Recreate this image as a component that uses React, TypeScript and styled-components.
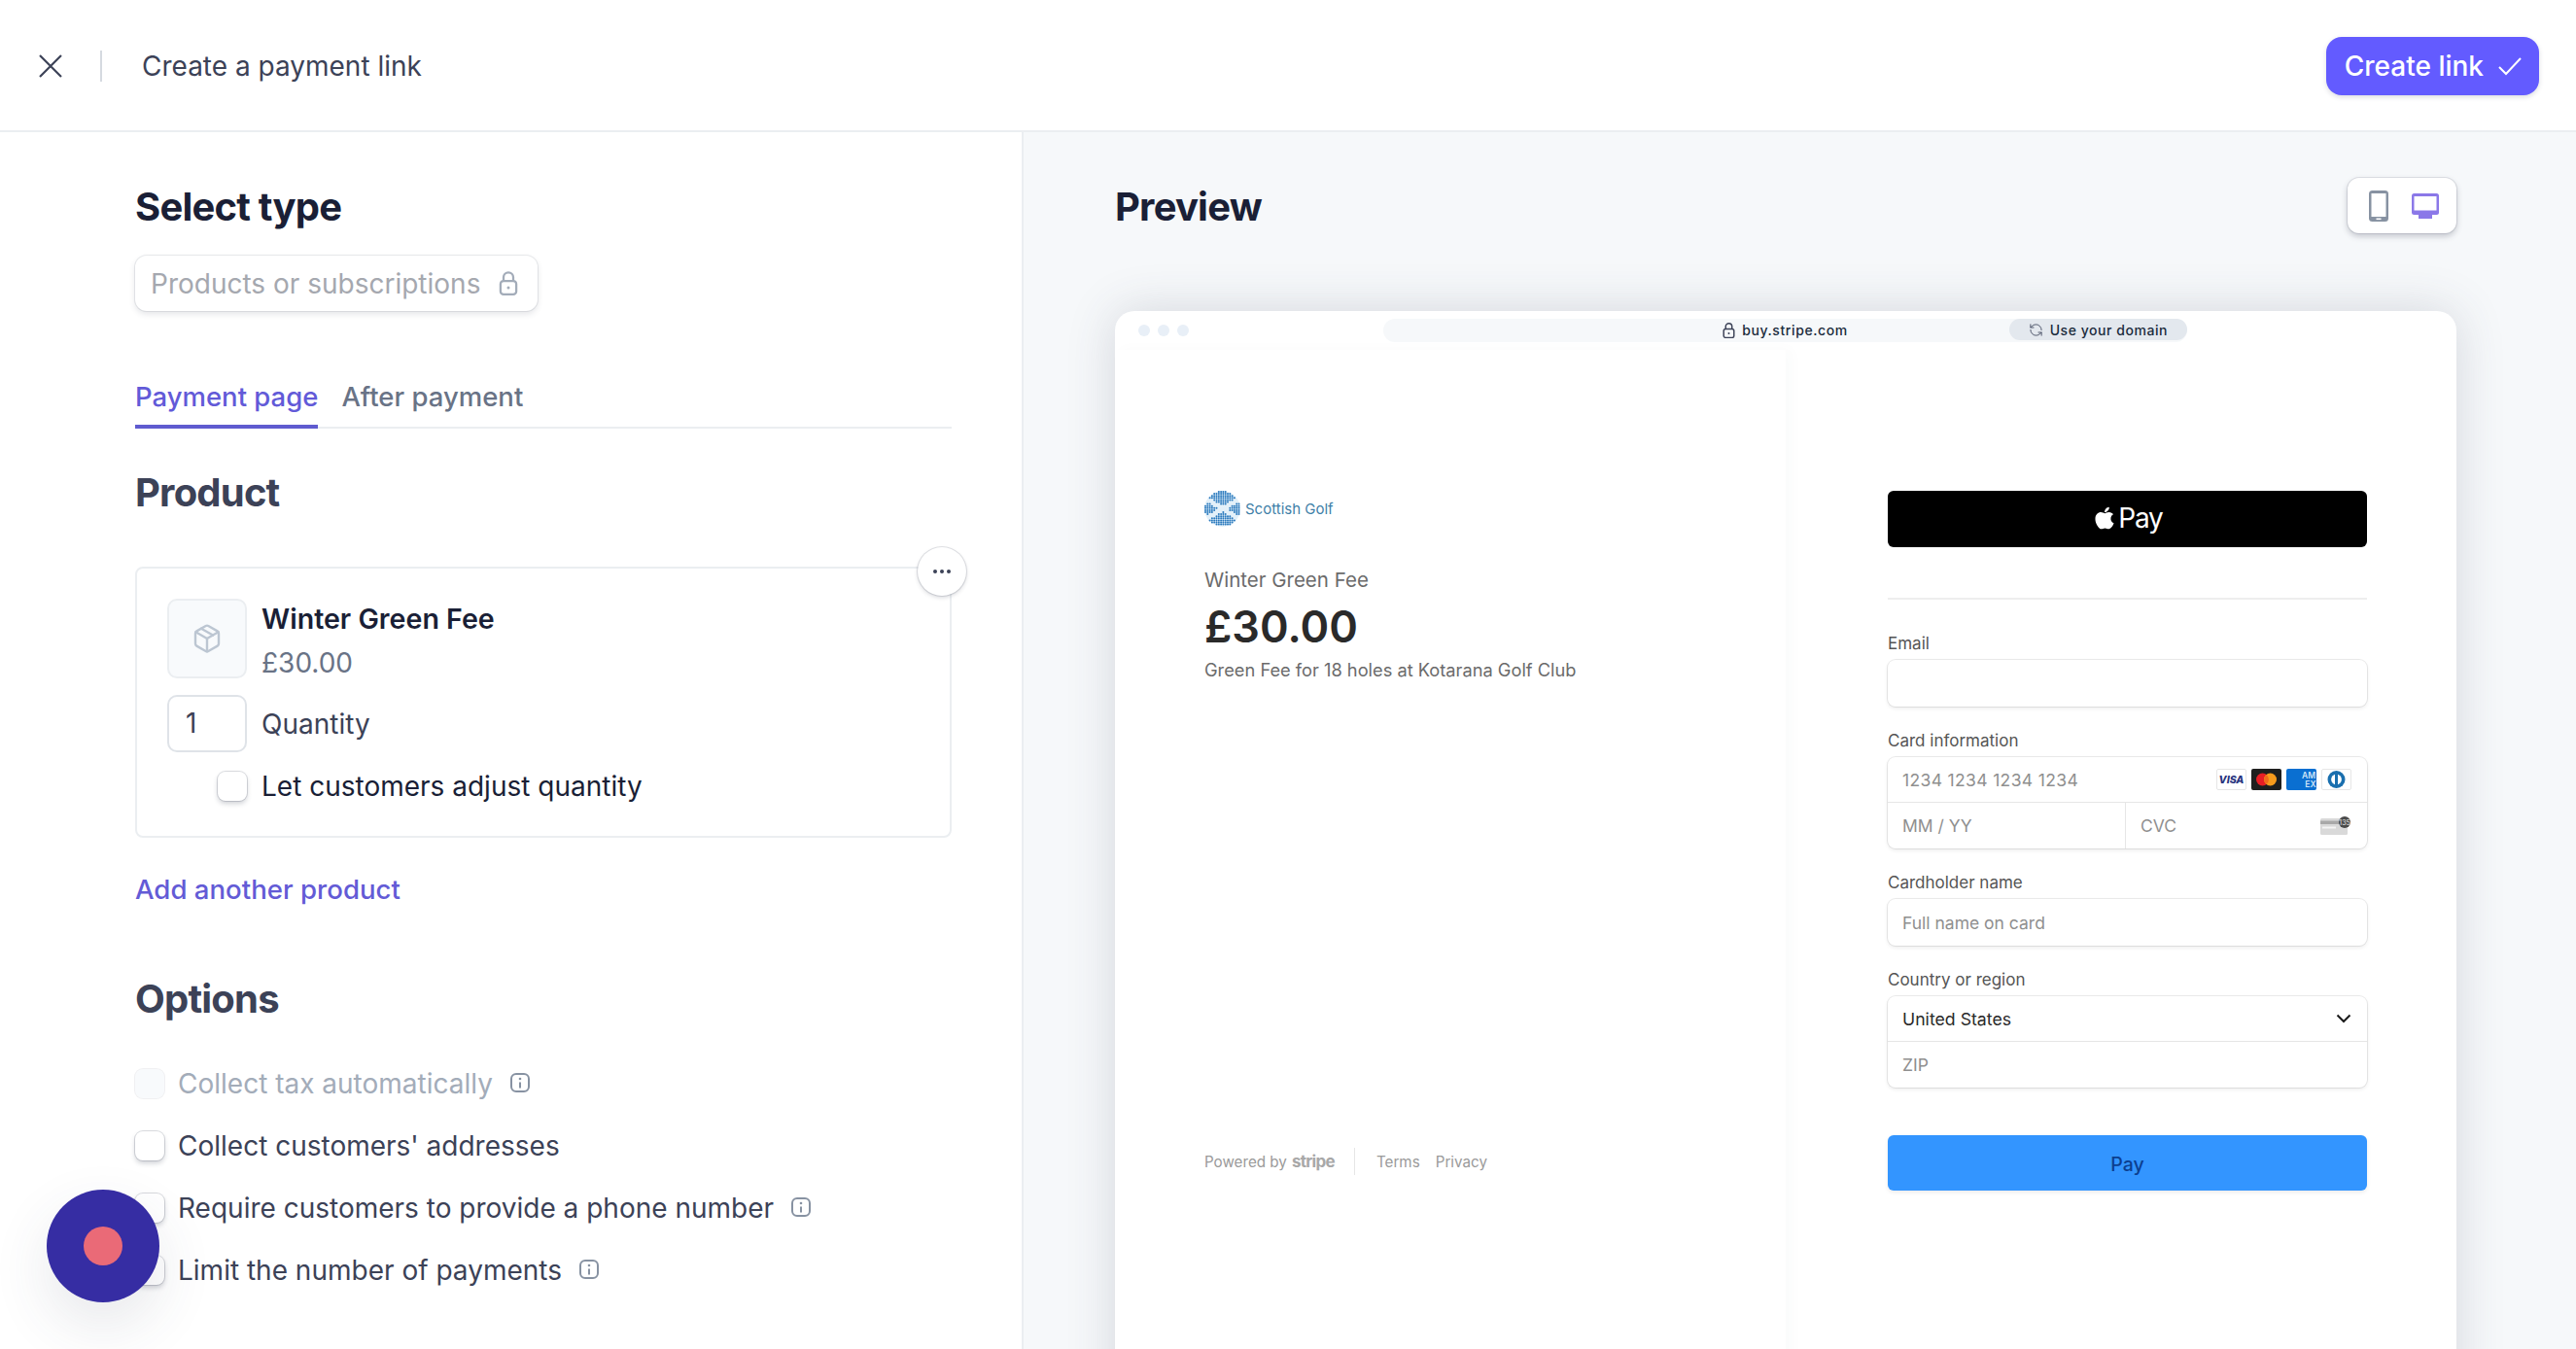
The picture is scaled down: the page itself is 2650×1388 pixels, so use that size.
import React from 'react';
import styled, { createGlobalStyle } from 'styled-components';
import { FaApple } from 'react-icons/fa';
import { Package, RefreshCcw } from 'lucide-react';

const GlobalStyle = createGlobalStyle`
  html, body {
    margin: 0;
    padding: 0;
    background: #ffffff;
    font-family: Inter, "Liberation Sans", sans-serif;
  }
  * {
    box-sizing: border-box;
  }
`;

const Page = styled.div`
  position: relative;
  display: flex;
  flex-direction: column;
  height: 100vh;
  overflow: hidden;
`;

const TopBar = styled.header`
  display: flex;
  align-items: center;
  flex: 0 0 136px;
  padding: 2px 38px 0 38px;
  border-bottom: 2px solid #ebeef1;
`;

const CloseButton = styled.div`
  display: flex;
  width: 28px;
  height: 28px;
  color: #3c4257;
`;

const TopDivider = styled.div`
  width: 2px;
  height: 32px;
  margin: 0 41px 0 37px;
  background: #d5dae0;
`;

const PageTitle = styled.div`
  flex: 1;
  font-size: 28px;
  line-height: 40px;
  color: #3c4257;
`;

const CreateButton = styled.div`
  display: flex;
  align-items: center;
  gap: 15px;
  height: 60px;
  padding: 0 18px 0 19px;
  border-radius: 16px;
  background: #635bff;
  color: #ffffff;
  font-size: 28px;
  font-weight: 500;
  box-shadow: 0 2px 5px rgba(60, 66, 87, 0.18);
`;

const Columns = styled.div`
  display: flex;
  flex: 1;
  min-height: 0;
`;

const LeftPanel = styled.main`
  flex: 0 0 1053px;
  padding: 53px 72px 0 139px;
  border-right: 2px solid #ebeef1;
`;

const RightPanel = styled.section`
  flex: 1;
  padding: 47px 123px 0 94px;
  background: #f6f8fa;
`;

const Heading = styled.h2<{ $muted?: boolean }>`
  margin: 0;
  font-size: 40px;
  line-height: 48px;
  font-weight: 700;
  letter-spacing: -0.8px;
  color: ${props => (props.$muted ? '#3c4257' : '#1a1f36')};
`;

const TypeBox = styled.div`
  display: inline-flex;
  align-items: center;
  gap: 19px;
  width: 414px;
  height: 57px;
  margin-top: 26px;
  padding: 0 16px;
  border-radius: 12px;
  background: #ffffff;
  color: #a5a8af;
  font-size: 28px;
  box-shadow: 0 0 0 1px rgba(60, 66, 87, 0.1), 0 3px 6px rgba(60, 66, 87, 0.14);
  white-space: nowrap;
`;

const TabBar = styled.div`
  display: flex;
  gap: 24px;
  height: 56px;
  margin-top: 65px;
  border-bottom: 2px solid #ebeef1;
`;

const Tab = styled.div<{ $active?: boolean }>`
  height: 56px;
  line-height: 47px;
  font-size: 27.5px;
  font-weight: 500;
  color: ${props => (props.$active ? '#625ad8' : '#697386')};
  border-bottom: ${props => (props.$active ? '4px solid #5f5bcf' : 'none')};
`;

const ProductHeading = styled(Heading)`
  margin-top: 42px;
`;

const ProductCard = styled.div`
  position: relative;
  height: 279px;
  margin-top: 52px;
  padding: 31px 31px 0;
  border: 2px solid #ebeef1;
  border-radius: 8px;
`;

const MoreButton = styled.div`
  position: absolute;
  top: -22px;
  right: -17px;
  display: flex;
  align-items: center;
  justify-content: center;
  gap: 3px;
  width: 50px;
  height: 50px;
  border-radius: 50%;
  background: #ffffff;
  box-shadow: 0 0 0 1px rgba(60, 66, 87, 0.14), 0 2px 4px rgba(60, 66, 87, 0.2);
`;

const MoreDot = styled.span`
  width: 4px;
  height: 4px;
  border-radius: 50%;
  background: #3c4257;
`;

const ProductRow = styled.div`
  display: flex;
  gap: 15px;
  height: 82px;
`;

const Thumb = styled.div`
  display: flex;
  align-items: center;
  justify-content: center;
  width: 82px;
  height: 82px;
  border: 2px solid #ebeef1;
  border-radius: 10px;
  background: #f8fafc;
  color: #bcc6d2;
`;

const ProductText = styled.div`
  display: flex;
  flex-direction: column;
  gap: 5px;
  padding-top: 1px;
`;

const ProductName = styled.div`
  font-size: 28.6px;
  line-height: 40px;
  font-weight: 600;
  color: #1a1f36;
`;

const ProductPrice = styled.div`
  font-size: 28px;
  line-height: 40px;
  color: #697386;
`;

const QuantityRow = styled.div`
  display: flex;
  align-items: center;
  gap: 15px;
  margin-top: 17px;
`;

const QuantityInput = styled.div`
  width: 82px;
  height: 59px;
  padding-left: 19px;
  line-height: 58px;
  font-size: 28px;
  color: #3c4257;
  border-radius: 10px;
  box-shadow: inset 0 0 0 2px #dfe3e8;
`;

const RowLabel = styled.div<{ $disabled?: boolean; $dark?: boolean }>`
  font-size: 28px;
  line-height: 40px;
  white-space: nowrap;
  color: ${props => (props.$disabled ? '#a3acb9' : props.$dark ? '#1a1f36' : '#3c4257')};
`;

const AdjustRow = styled.div`
  display: flex;
  align-items: center;
  gap: 15px;
  height: 31px;
  margin: 19px 0 0 52px;
`;

const Checkbox = styled.div<{ $disabled?: boolean }>`
  flex: 0 0 30px;
  height: 30px;
  border-radius: 8px;
  background: ${props => (props.$disabled ? '#f8fafc' : '#ffffff')};
  box-shadow: ${props =>
    props.$disabled
      ? '0 0 0 1px rgba(60, 66, 87, 0.08)'
      : '0 0 0 1px rgba(60, 66, 87, 0.18), 0 3px 5px rgba(60, 66, 87, 0.24)'};
`;

const AddLink = styled.div`
  margin-top: 33px;
  font-size: 27.6px;
  line-height: 40px;
  font-weight: 500;
  color: #635bd6;
`;

const OptionsHeading = styled(Heading)`
  margin-top: 69px;
`;

const OptionList = styled.div`
  display: flex;
  flex-direction: column;
  margin-top: 31px;
`;

const OptionRow = styled.div`
  display: flex;
  align-items: center;
  gap: 14px;
  height: 64px;
`;

const InfoIcon = styled.svg`
  flex: 0 0 22px;
  margin-left: 3px;
  margin-bottom: 2px;
  color: #8792a2;
`;

const Launcher = styled.div`
  position: absolute;
  left: 48px;
  bottom: 48px;
  display: flex;
  align-items: center;
  justify-content: center;
  width: 116px;
  height: 116px;
  border-radius: 50%;
  background: #362da3;
  box-shadow: 0 24px 60px rgba(60, 66, 87, 0.12);
`;

const LauncherDot = styled.div`
  width: 40px;
  height: 40px;
  border-radius: 50%;
  background: #ea6a77;
`;

const PreviewHeader = styled.div`
  display: flex;
  justify-content: space-between;
  height: 60px;
  align-items: center;
`;

const DeviceToggle = styled.div`
  display: flex;
  align-items: center;
  align-self: flex-start;
  gap: 24px;
  width: 112px;
  height: 57px;
  padding-left: 22px;
  border-radius: 12px;
  background: #ffffff;
  box-shadow: 0 0 0 1px rgba(60, 66, 87, 0.12), 0 3px 6px rgba(60, 66, 87, 0.28);
`;

const BrowserFrame = styled.div`
  height: 1200px;
  margin-top: 77px;
  border-radius: 20px 20px 0 0;
  background: #ffffff;
  box-shadow: 0 0 50px rgba(60, 66, 87, 0.18);
`;

const BrowserBar = styled.div`
  display: grid;
  grid-template-columns: 252px 1fr;
  align-items: start;
  height: 40px;
  padding: 8px 277px 0 24px;
`;

const BrowserDots = styled.div`
  display: flex;
  gap: 8px;
  padding-top: 6px;
`;

const BrowserDot = styled.span`
  width: 12px;
  height: 12px;
  border-radius: 50%;
  background: #e8eff7;
`;

const UrlBar = styled.div`
  display: grid;
  grid-template-columns: 1fr auto 1fr;
  align-items: center;
  height: 24px;
  border-radius: 12px;
  background: #f6f8fa;
`;

const UrlText = styled.div`
  grid-column: 2;
  display: flex;
  align-items: center;
  gap: 7px;
  font-size: 14px;
  line-height: 24px;
  font-weight: 500;
  letter-spacing: 0.6px;
  color: #1a2b3c;
`;

const DomainPill = styled.div`
  grid-column: 3;
  justify-self: end;
  align-self: start;
  display: flex;
  align-items: center;
  gap: 7px;
  height: 22px;
  padding: 0 20px;
  border-radius: 11px;
  background: #e3e8ee;
  color: #1a2b3c;
  font-size: 14px;
  font-weight: 500;
  letter-spacing: 0.55px;
`;

const CheckoutBody = styled.div`
  display: grid;
  grid-template-columns: 690px 1fr;
  height: 1160px;
`;

const SummaryColumn = styled.div`
  padding: 145px 0 0 92px;
  box-shadow: 6px 0 14px rgba(60, 66, 87, 0.025);
`;

const BrandRow = styled.div`
  display: flex;
  align-items: center;
  gap: 5px;
  height: 37px;
  font-size: 15px;
  color: #3f7fa8;
`;

const SummaryName = styled.div`
  margin-top: 41px;
  font-size: 20.5px;
  line-height: 28px;
  color: #6b6b6b;
`;

const SummaryPrice = styled.div`
  margin-top: 5px;
  font-size: 45px;
  line-height: 58px;
  font-weight: 600;
  color: #2a2a2a;
`;

const SummaryDescription = styled.div`
  margin-top: 3px;
  font-size: 18.25px;
  line-height: 24px;
  color: #6b6b6b;
`;

const SummaryFooter = styled.div`
  display: flex;
  align-items: center;
  height: 28px;
  margin-top: 480px;
  font-size: 15.2px;
  color: #9a9a9a;
`;

const StripeWord = styled.span`
  margin-left: 5px;
  font-size: 17px;
  font-weight: 700;
  letter-spacing: -0.7px;
  color: #a8a8a8;
`;

const FooterDivider = styled.span`
  width: 1px;
  height: 28px;
  margin: 0 22px 0 20px;
  background: #e6e6e6;
`;

const FooterLink = styled.span`
  margin-right: 16px;
`;

const FormColumn = styled.div`
  padding: 145px 92px 0 105px;
`;

const ApplePayButton = styled.div`
  display: flex;
  align-items: center;
  justify-content: center;
  gap: 1px;
  height: 58px;
  padding-bottom: 2px;
  border-radius: 6px;
  background: #000000;
  color: #ffffff;
  font-size: 28px;
  letter-spacing: -1.2px;
`;

const FormSeparator = styled.div`
  height: 2px;
  margin: 52px 0 34px;
  background: #eeeeee;
`;

const FieldLabel = styled.div`
  margin-bottom: 6px;
  font-size: 17px;
  line-height: 22px;
  color: #555555;
`;

const FieldBox = styled.div`
  margin-bottom: 24px;
  border-radius: 8px;
  background: #ffffff;
  box-shadow: 0 0 0 1px rgba(0, 0, 0, 0.08), 0 2px 4px rgba(0, 0, 0, 0.08);
`;

const FieldRow = styled.div<{ $line?: boolean; $height?: number }>`
  display: flex;
  align-items: center;
  justify-content: space-between;
  height: ${props => props.$height ?? 47}px;
  padding: 0 16px 0 15px;
  border-bottom: ${props => (props.$line ? '1px solid #e6e6e6' : 'none')};
`;

const SplitRow = styled.div`
  display: grid;
  grid-template-columns: 245px 1fr;
  height: 47px;
`;

const SplitCell = styled.div<{ $line?: boolean }>`
  display: flex;
  align-items: center;
  justify-content: space-between;
  padding: 0 16px 0 15px;
  border-right: ${props => (props.$line ? '1px solid #e6e6e6' : 'none')};
`;

const Placeholder = styled.span`
  font-size: 17.5px;
  color: #8f8f8f;
`;

const CardNumber = styled(Placeholder)`
  letter-spacing: 0.35px;
`;

const FieldValue = styled.span`
  font-size: 17.7px;
  color: #2a2a2a;
`;

const CardIcons = styled.div`
  display: flex;
  gap: 5px;
`;

const PayButton = styled.div`
  display: flex;
  align-items: center;
  justify-content: center;
  height: 57px;
  margin-top: 49px;
  padding-top: 2px;
  border-radius: 6px;
  background: #3395ff;
  color: #0c3f8f;
  font-size: 19.5px;
  font-weight: 500;
  box-shadow: 0 2px 4px rgba(0, 0, 0, 0.08);
`;

const LockIcon = ({ size = 20, color = '#a3acb9' }: { size?: number; color?: string }) => (
  <svg width={size} height={size * 1.25} viewBox="0 0 16 20" fill="none" stroke={color} strokeWidth="1.8">
    <rect x="1.5" y="8" width="13" height="11" rx="2.5" />
    <path d="M4 8V5a4 4 0 0 1 8 0v3" />
    <circle cx="8" cy="13.5" r="1.2" fill={color} stroke="none" />
  </svg>
);

const Info = () => (
  <InfoIcon width="22" height="22" viewBox="0 0 22 22" fill="none" stroke="currentColor" strokeWidth="2">
    <rect x="2" y="2" width="18" height="18" rx="5" />
    <circle cx="11" cy="7" r="1.3" fill="currentColor" stroke="none" />
    <path d="M11 10.500v6" />
  </InfoIcon>
);

// dots of the saltire badge: a flattened pale cross, big wedges top and bottom
const saltireDots = () => {
  const dots: { x: number; y: number }[] = [];
  for (let y = 1; y < 37; y += 2.1) {
    for (let x = 1; x < 37; x += 2.3) {
      const dx = x - 18.5;
      const dy = y - 18.5;
      const inCircle = dx * dx + dy * dy < 18 * 18;
      const onCross = Math.abs(Math.abs(dy) - Math.abs(dx) * 0.62) < 2.8;
      if (inCircle && !onCross) dots.push({ x, y });
    }
  }
  return dots;
};

const ScottishLogo = () => (
  <svg width="37" height="37" viewBox="0 0 37 37">
    <circle cx="18.5" cy="18.5" r="18.5" fill="#e3f0f9" />
    {saltireDots().map(dot => (
      <circle key={`${dot.x}-${dot.y}`} cx={dot.x} cy={dot.y} r="1" fill="#2a79bd" />
    ))}
  </svg>
);

const VisaIcon = () => (
  <svg width="31" height="22" viewBox="0 0 31 22">
    <rect x="0.5" y="0.5" width="30" height="21" rx="1.5" fill="#fff" stroke="#e6e6e6" />
    <text x="15.5" y="15" textAnchor="middle" fontFamily="Inter, sans-serif" fontSize="10.5" fontWeight="800" fontStyle="italic" fill="#27337e">VISA</text>
  </svg>
);

const MastercardIcon = () => (
  <svg width="31" height="22" viewBox="0 0 31 22">
    <rect width="31" height="22" rx="2" fill="#1f1f1f" />
    <circle cx="11.5" cy="11" r="6.5" fill="#e81e25" />
    <circle cx="19.5" cy="11" r="6.5" fill="#f89b1c" />
    <path d="M15.5 5.900a6.500 6.500 0 0 1 0 10.200a6.500 6.500 0 0 1 0-10.200z" fill="#f26a1b" />
  </svg>
);

const AmexIcon = () => (
  <svg width="31" height="22" viewBox="0 0 31 22">
    <rect width="31" height="22" rx="2" fill="#0a6fd1" />
    <text x="23" y="10" textAnchor="middle" fontFamily="Inter, sans-serif" fontSize="8.500" fontWeight="600" fill="#cfe4f7">AM</text>
    <text x="25" y="18.500" textAnchor="middle" fontFamily="Inter, sans-serif" fontSize="8.500" fontWeight="600" fill="#cfe4f7">EX</text>
  </svg>
);

const DinersIcon = () => (
  <svg width="31" height="22" viewBox="0 0 31 22">
    <rect x="0.5" y="0.5" width="30" height="21" rx="1.5" fill="#fff" stroke="#e6e6e6" />
    <circle cx="15.5" cy="11" r="9" fill="#1a6fae" />
    <circle cx="15.5" cy="11" r="5.4" fill="#fff" />
    <rect x="14" y="4.500" width="3" height="13" fill="#1a6fae" />
  </svg>
);

const CvcIcon = () => (
  <svg width="32" height="20" viewBox="0 0 32 20">
    <rect x="0" y="2" width="28" height="17" rx="1.5" fill="#d9d9d9" />
    <rect x="0" y="4.500" width="28" height="3.500" fill="#a9a9a9" />
    <rect x="2" y="10.500" width="14" height="2" fill="#f4f4f4" />
    <circle cx="25" cy="6" r="6" fill="#4a4a4a" />
    <text x="25" y="8.500" textAnchor="middle" fontFamily="Inter, sans-serif" fontSize="7" fill="#e8e8e8">135</text>
  </svg>
);

const App: React.FC = () => {
  return (
    <Page>
      <GlobalStyle />
      <TopBar>
        <CloseButton>
          <svg width="28" height="28" viewBox="0 0 28 28" fill="none" stroke="currentColor" strokeWidth="2.2">
            <path d="M3 3L25 25M25 3L3 25" />
          </svg>
        </CloseButton>
        <TopDivider />
        <PageTitle>Create a payment link</PageTitle>
        <CreateButton>
          Create link
          <svg width="24" height="20" viewBox="0 0 24 20" fill="none" stroke="currentColor" strokeWidth="2">
            <path d="M1 11l7 7L23 2" />
          </svg>
        </CreateButton>
      </TopBar>
      <Columns>
        <LeftPanel>
          <Heading>Select type</Heading>
          <TypeBox>
            Products or subscriptions
            <LockIcon />
          </TypeBox>
          <TabBar>
            <Tab $active>Payment page</Tab>
            <Tab>After payment</Tab>
          </TabBar>
          <ProductHeading $muted>Product</ProductHeading>
          <ProductCard>
            <MoreButton>
              <MoreDot />
              <MoreDot />
              <MoreDot />
            </MoreButton>
            <ProductRow>
              <Thumb>
                <Package size={32} strokeWidth={1.8} />
              </Thumb>
              <ProductText>
                <ProductName>Winter Green Fee</ProductName>
                <ProductPrice>£30.00</ProductPrice>
              </ProductText>
            </ProductRow>
            <QuantityRow>
              <QuantityInput>1</QuantityInput>
              <RowLabel>Quantity</RowLabel>
            </QuantityRow>
            <AdjustRow>
              <Checkbox />
              <RowLabel $dark>Let customers adjust quantity</RowLabel>
            </AdjustRow>
          </ProductCard>
          <AddLink>Add another product</AddLink>
          <OptionsHeading $muted>Options</OptionsHeading>
          <OptionList>
            <OptionRow>
              <Checkbox $disabled />
              <RowLabel $disabled>Collect tax automatically</RowLabel>
              <Info />
            </OptionRow>
            <OptionRow>
              <Checkbox />
              <RowLabel>Collect customers' addresses</RowLabel>
            </OptionRow>
            <OptionRow>
              <Checkbox />
              <RowLabel>Require customers to provide a phone number</RowLabel>
              <Info />
            </OptionRow>
            <OptionRow>
              <Checkbox />
              <RowLabel>Limit the number of payments</RowLabel>
              <Info />
            </OptionRow>
          </OptionList>
        </LeftPanel>
        <RightPanel>
          <PreviewHeader>
            <Heading>Preview</Heading>
            <DeviceToggle>
              <svg width="20" height="32" viewBox="0 0 20 32">
                <rect width="20" height="32" rx="3.5" fill="#8792a2" />
                <rect x="2.5" y="3" width="15" height="24" fill="#ffffff" />
                <rect x="7.5" y="28.5" width="5" height="1.6" fill="#ffffff" />
              </svg>
              <svg width="28" height="26" viewBox="0 0 28 26">
                <rect width="28" height="22" rx="2.5" fill="#8b78e8" />
                <rect x="2.5" y="3" width="23" height="14.5" fill="#ffffff" />
                <rect x="7" y="22" width="14" height="4" fill="#8b78e8" />
              </svg>
            </DeviceToggle>
          </PreviewHeader>
          <BrowserFrame>
            <BrowserBar>
              <BrowserDots>
                <BrowserDot />
                <BrowserDot />
                <BrowserDot />
              </BrowserDots>
              <UrlBar>
                <UrlText>
                  <LockIcon size={13} color="#3c4257" />
                  buy.stripe.com
                </UrlText>
                <DomainPill>
                  <RefreshCcw size={15} strokeWidth={1.6} color="#4f566b" />
                  Use your domain
                </DomainPill>
              </UrlBar>
            </BrowserBar>
            <CheckoutBody>
              <SummaryColumn>
                <BrandRow>
                  <ScottishLogo />
                  Scottish Golf
                </BrandRow>
                <SummaryName>Winter Green Fee</SummaryName>
                <SummaryPrice>£30.00</SummaryPrice>
                <SummaryDescription>Green Fee for 18 holes at Kotarana Golf Club</SummaryDescription>
                <SummaryFooter>
                  Powered by
                  <StripeWord>stripe</StripeWord>
                  <FooterDivider />
                  <FooterLink>Terms</FooterLink>
                  <FooterLink>Privacy</FooterLink>
                </SummaryFooter>
              </SummaryColumn>
              <FormColumn>
                <ApplePayButton>
                  <FaApple size={26} />
                  Pay
                </ApplePayButton>
                <FormSeparator />
                <FieldLabel>Email</FieldLabel>
                <FieldBox>
                  <FieldRow $height={48} />
                </FieldBox>
                <FieldLabel>Card information</FieldLabel>
                <FieldBox>
                  <FieldRow $line>
                    <CardNumber>1234 1234 1234 1234</CardNumber>
                    <CardIcons>
                      <VisaIcon />
                      <MastercardIcon />
                      <AmexIcon />
                      <DinersIcon />
                    </CardIcons>
                  </FieldRow>
                  <SplitRow>
                    <SplitCell $line>
                      <Placeholder>MM / YY</Placeholder>
                    </SplitCell>
                    <SplitCell>
                      <Placeholder>CVC</Placeholder>
                      <CvcIcon />
                    </SplitCell>
                  </SplitRow>
                </FieldBox>
                <FieldLabel>Cardholder name</FieldLabel>
                <FieldBox>
                  <FieldRow $height={48}>
                    <Placeholder>Full name on card</Placeholder>
                  </FieldRow>
                </FieldBox>
                <FieldLabel>Country or region</FieldLabel>
                <FieldBox>
                  <FieldRow $line>
                    <FieldValue>United States</FieldValue>
                    <svg width="16" height="10" viewBox="0 0 16 10" fill="none" stroke="#1a1a1a" strokeWidth="2">
                      <path d="M1.500 1.500L8 8l6.500-6.500" />
                    </svg>
                  </FieldRow>
                  <FieldRow>
                    <Placeholder>ZIP</Placeholder>
                  </FieldRow>
                </FieldBox>
                <PayButton>Pay</PayButton>
              </FormColumn>
            </CheckoutBody>
          </BrowserFrame>
        </RightPanel>
      </Columns>
      <Launcher>
        <LauncherDot />
      </Launcher>
    </Page>
  );
};

export default App;
